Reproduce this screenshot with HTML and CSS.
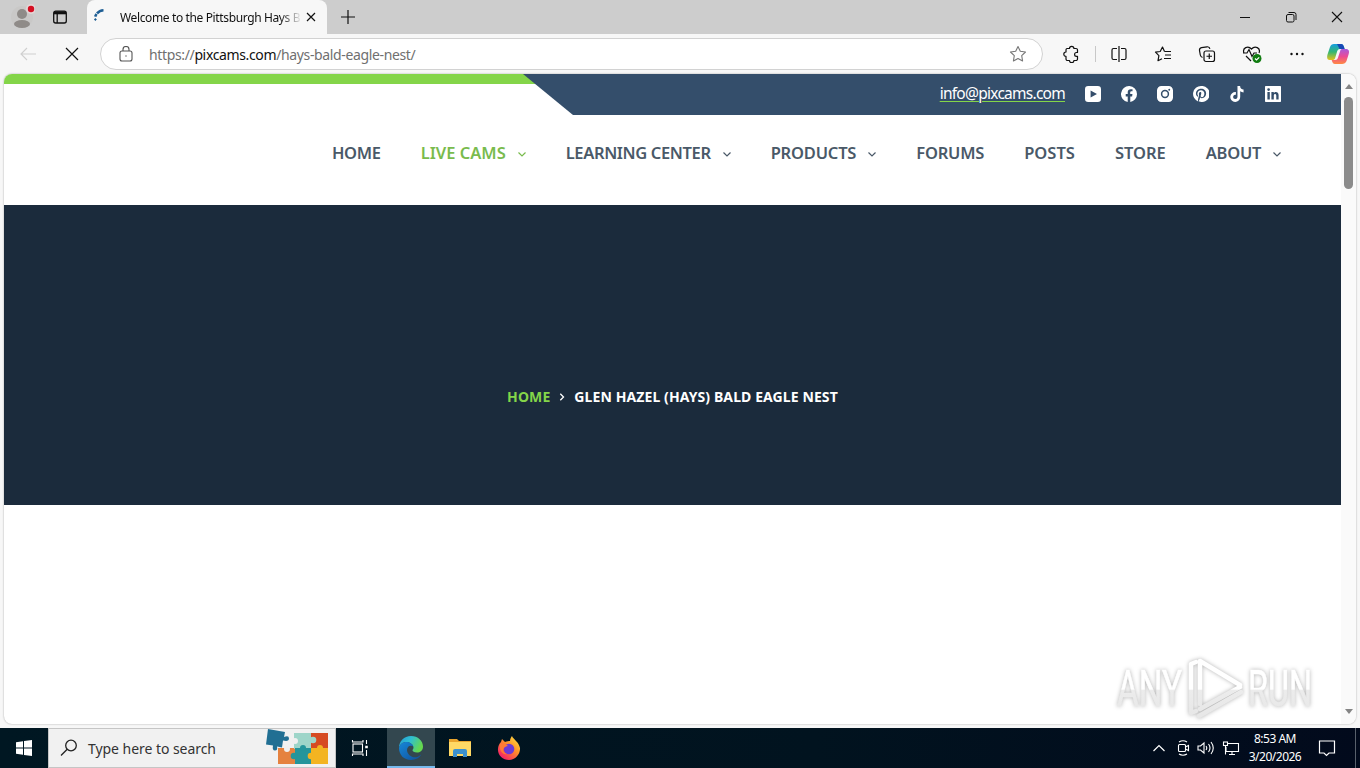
FILE: index.html
```html
<!DOCTYPE html>
<html lang="en">
<head>
    <meta charset="UTF-8">
    <meta name="viewport" content="width=device-width, initial-scale=1.0">
    <title>Welcome to the Pittsburgh Hays Bald Eagle Nest</title>
    <link rel="stylesheet" href="styles.css">
</head>
<body>

    <!-- Tab strip -->
    <div class="tabstrip">
        <svg class="profile" width="28" height="34" viewBox="0 0 28 34">
            <circle cx="15" cy="17" r="11" fill="#c9c8c7"/>
            <circle cx="15" cy="14" r="5" fill="#8f8b88"/>
            <ellipse cx="15" cy="24" rx="8" ry="4" fill="#8f8b88"/>
            <circle cx="24" cy="9" r="5" fill="#e3d5d5"/>
            <circle cx="24" cy="9" r="3.2" fill="#d40f22"/>
        </svg>
        <svg class="tab-menu" width="16" height="16" viewBox="0 0 16 16" fill="none" stroke="#111" stroke-width="1.3">
            <rect x="1.7" y="2.2" width="12.6" height="11.8" rx="2"/>
            <path d="M2 3.8h12" stroke-width="3"/>
            <path d="M5.2 5v9"/>
        </svg>
        <div class="tab">
            <svg class="spinner" width="16" height="16" viewBox="0 0 16 16" fill="none" stroke="#1f5f95" stroke-width="2.6">
                <path d="M11.500 2.200A9 9 0 0 0 5 5.400"/>
                <path d="M4.600 6A9 9 0 0 0 3.200 8.600"/>
                <circle cx="3.400" cy="11.500" r=".8" fill="#1f5f95" stroke-width="1"/>
            </svg>
            <span class="tab-title">Welcome to the Pittsburgh Hays B</span>
            <svg class="tab-close" width="10" height="10" viewBox="0 0 10 10" stroke="#111" stroke-width="1.2"><path d="M1 1l8 8M9 1l-8 8"/></svg>
        </div>
        <svg class="tab-add" width="14" height="14" viewBox="0 0 14 14" stroke="#111" stroke-width="1.2"><path d="M7 0v14M0 7h14"/></svg>
        <div class="window-buttons">
            <svg width="12" height="12" viewBox="0 0 12 12" stroke="#111"><path d="M1 6.500h10"/></svg>
            <svg width="12" height="12" viewBox="0 0 12 12" fill="none" stroke="#111"><rect x="1.500" y="3.500" width="7.500" height="7.500" rx="1.500"/><path d="M3.500 1.500H9A2 2 0 0 1 11 3.500V9"/></svg>
            <svg width="12" height="12" viewBox="0 0 12 12" stroke="#111" stroke-width="1.1"><path d="M1 1l10 10M11 1L1 11"/></svg>
        </div>
    </div>

    <!-- Address bar -->
    <div class="toolbar">
        <svg class="back" width="16" height="14" viewBox="0 0 16 14" fill="none" stroke="#cfcfcf" stroke-width="1.1"><path d="M16 7H1M7 1L1 7l6 6"/></svg>
        <svg class="stop" width="14" height="14" viewBox="0 0 14 14" stroke="#111" stroke-width="1.2"><path d="M1 1l12 12M13 1L1 13"/></svg>
        <div class="address">
            <svg width="14" height="16" viewBox="0 0 14 16" fill="none" stroke="#555" stroke-width="1.1"><rect x="1" y="5" width="12" height="10" rx="2"/><path d="M4 5V3.500a3 3 0 0 1 6 0V5"/><circle cx="7" cy="10" r=".7" fill="#555" stroke="none"/></svg>
            <span class="url">https://<b>pixcams.com</b>/hays-bald-eagle-nest/</span>
            <svg class="star" width="18" height="18" viewBox="0 0 18 18" fill="none" stroke="#777" stroke-width="1.1" stroke-linejoin="round"><path d="M9 1.500l2.300 4.800 5.200.7-3.800 3.700.9 5.300L9 13.500 4.400 16l.9-5.300L1.500 7l5.200-.7z"/></svg>
        </div>
        <div class="tools">
            <svg width="18" height="18" viewBox="0 0 18 18" fill="none" stroke="#111" stroke-width="1.2" stroke-linejoin="round"><path d="M5 3.500h2.500a2.200 2.200 0 0 1 4.400 0H14a1.500 1.500 0 0 1 1.500 1.500v2.500h-1a1.900 1.900 0 0 0 0 3.800h1V14a1.500 1.500 0 0 1-1.500 1.500h-2.100a2.200 2.200 0 0 1-4.400 0H5.500A1.500 1.500 0 0 1 4 14v-2.600a2.200 2.200 0 0 1 0-4.400V5a1.500 1.500 0 0 1 1-1.500z"/></svg>
            <i class="divider"></i>
            <svg width="18" height="18" viewBox="0 0 18 18" fill="none" stroke="#111" stroke-width="1.2"><path d="M7 3.500H3.500a1.500 1.500 0 0 0-1.500 1.500v8a1.500 1.500 0 0 0 1.500 1.500H7M11 3.500h3.500A1.500 1.500 0 0 1 16 5v8a1.500 1.500 0 0 1-1.500 1.500H11M9 1v16"/></svg>
            <svg width="18" height="18" viewBox="0 0 18 18" fill="none" stroke="#111" stroke-width="1.2" stroke-linejoin="round"><path d="M10.500 6.500L8.500 2 6.200 6.500 1.500 7.200l3.400 3.500-.9 5 4-2M10.500 6.500H17M11 10h6M10 13.500h7"/></svg>
            <svg width="18" height="18" viewBox="0 0 18 18" fill="none" stroke="#111" stroke-width="1.2"><rect x="6" y="6" width="10.500" height="10.500" rx="2"/><path d="M11.250 8.500v5.500M8.500 11.250H14M4.500 12.500C3 12 2.600 11.500 2.300 10L1.500 5.500C1.300 4 2 3 3.500 2.700L9 1.800c1.500-.2 2.600.4 2.900 2"/></svg>
            <svg width="20" height="18" viewBox="0 0 20 18" fill="none" stroke="#111" stroke-width="1.200"><path d="M2 8C0 3 6 0 9.500 4 13 0 19 3 17 8M4 11l5 5M1 8h4l2-3.500 3 7 2-3.500h3"/><circle cx="15" cy="13.500" r="4.500" fill="#107c10" stroke="none"/><path d="M13 13.500l1.500 1.500 2.700-2.700" stroke="#fff"/></svg>
            <svg width="18" height="18" viewBox="0 0 18 18" fill="#111"><circle cx="3.500" cy="9" r="1.200"/><circle cx="9" cy="9" r="1.200"/><circle cx="14.500" cy="9" r="1.200"/></svg>
            <svg class="copilot" width="24" height="24" viewBox="0 0 24 24">
                <defs>
                    <linearGradient id="cpA" x1="0" y1="0" x2="0" y2="1"><stop offset="0" stop-color="#169ee0"/><stop offset=".5" stop-color="#35b772"/><stop offset="1" stop-color="#e6c21a"/></linearGradient>
                    <linearGradient id="cpB" x1="0" y1="0" x2="0" y2="1"><stop offset="0" stop-color="#a85bdc"/><stop offset=".5" stop-color="#ec4b95"/><stop offset="1" stop-color="#ff8a42"/></linearGradient>
                </defs>
                <path d="M8 2h7c2 0 2.500 1.500 3 3l.6 2H14c-2 0-2.600 1.500-3.200 3.500L9 16.500C8.400 18 7.500 18 6 18H3.500C1 18 .8 15 1.500 12.500L4 5c.7-2 2-3 4-3z" fill="url(#cpA)"/>
                <path d="M11 2h4c2 0 2.500 1.500 3 3l.6 2h-5z" fill="#1748b5"/>
                <path d="M16 22H9c-2 0-2.500-1.500-3-3l-.3-1H9c2 0 2.600-1 3.200-3L14.500 8c.4-1 1-1 2-1H20c3 0 3.500 2.500 2.700 5L20.500 19c-.7 2-2.500 3-4.500 3z" fill="url(#cpB)"/>
            </svg>
        </div>
    </div>

    <!-- Web page -->
    <div class="viewport">
        <div class="page">
            <div class="topbar">
                <div class="topbar-inner">
                    <a class="email" href="#">info@pixcams.com</a>
                    <svg width="16" height="16" viewBox="0 0 20 20" fill="#fff"><path fill-rule="evenodd" d="M4 0h12a4 4 0 0 1 4 4v12a4 4 0 0 1-4 4H4a4 4 0 0 1-4-4V4a4 4 0 0 1 4-4zm3 5.500v9l8-4.500z"/></svg>
                    <svg width="16" height="16" viewBox="0 0 20 20" fill="#fff"><path d="M20 10.100a10 10 0 1 0-11.600 9.900v-7H5.900v-2.900h2.500V7.900c0-2.500 1.500-3.900 3.800-3.900 1.100 0 2.200.2 2.200.2v2.500h-1.300c-1.200 0-1.600.8-1.600 1.600v1.800h2.800l-.4 2.900h-2.300v7A10 10 0 0 0 20 10.100z"/></svg>
                    <svg width="16" height="16" viewBox="0 0 20 20" fill="#fff"><circle cx="10" cy="10" r="3.300"/><path fill-rule="evenodd" d="M5.500 0h9A5.500 5.500 0 0 1 20 5.500v9a5.500 5.500 0 0 1-5.500 5.500h-9A5.500 5.500 0 0 1 0 14.500v-9A5.500 5.500 0 0 1 5.500 0zM10 4.800a5.200 5.200 0 1 0 0 10.400 5.200 5.200 0 0 0 0-10.400zm5.300-1.400a1.200 1.200 0 1 0 0 2.400 1.200 1.200 0 0 0 0-2.400z"/></svg>
                    <svg width="16" height="16" viewBox="0 0 20 20" fill="#fff"><path d="M10 0a10 10 0 0 0-3.600 19.300c-.1-.8-.2-2 0-2.900l1.200-5s-.3-.6-.3-1.500c0-1.400.8-2.400 1.800-2.400.9 0 1.300.6 1.300 1.400 0 .8-.5 2.100-.8 3.300-.2 1 .5 1.800 1.500 1.800 1.800 0 3.100-1.900 3.100-4.600 0-2.400-1.700-4.100-4.200-4.100-2.800 0-4.500 2.100-4.500 4.300 0 .9.300 1.800.7 2.300l.1.300-.3 1.100c0 .2-.1.200-.3.100-1.300-.6-2-2.400-2-3.900 0-3.100 2.300-6 6.600-6 3.400 0 6.100 2.500 6.100 5.700 0 3.400-2.200 6.200-5.200 6.200-1 0-1.900-.5-2.300-1.200l-.6 2.400c-.2.900-.8 1.900-1.200 2.600A10 10 0 1 0 10 0z"/></svg>
                    <svg width="16" height="16" viewBox="0 0 20 20" fill="#fff"><path d="M18.200 4.500a4.600 4.600 0 0 1-4.300-4.500h-3.300v13.700a2.700 2.700 0 1 1-2-2.700V7.600a6.200 6.200 0 1 0 5.400 6.100v-7a7.800 7.800 0 0 0 4.200 1.300z"/></svg>
                    <svg width="16" height="16" viewBox="0 0 20 20" fill="#fff"><path fill-rule="evenodd" d="M1 0h18a1 1 0 0 1 1 1v18a1 1 0 0 1-1 1H1a1 1 0 0 1-1-1V1a1 1 0 0 1 1-1zm2 7.500V17h3V7.500zM4.500 2.800a1.700 1.700 0 1 0 0 3.400 1.700 1.700 0 0 0 0-3.400zM8 7.500V17h3v-5c0-2.700 3.100-2.600 3.100 0v5H17v-5.700c0-4.500-4.500-4.900-6-2.400V7.500z"/></svg>
                </div>
            </div>
            <nav class="menu">
                <a>HOME</a>
                <a class="active">LIVE CAMS<svg width="8" height="8" viewBox="0 0 8 8"><path d="M.5 2.500L4 6l3.500-3.500"/></svg></a>
                <a class="learning">LEARNING CENTER<svg width="8" height="8" viewBox="0 0 8 8"><path d="M.5 2.500L4 6l3.500-3.500"/></svg></a>
                <a class="products">PRODUCTS<svg width="8" height="8" viewBox="0 0 8 8"><path d="M.5 2.500L4 6l3.500-3.500"/></svg></a>
                <a class="products">FORUMS</a>
                <a class="short">POSTS</a>
                <a class="short">STORE</a>
                <a>ABOUT<svg width="8" height="8" viewBox="0 0 8 8"><path d="M.5 2.500L4 6l3.500-3.500"/></svg></a>
            </nav>
            <div class="hero">
                <div class="breadcrumbs">
                    <span class="crumb-home">HOME</span>
                    <svg width="8" height="8" viewBox="0 0 8 8" fill="none" stroke="#fff" stroke-width="1.300"><path d="M2.300.8L5.500 4 2.300 7.200"/></svg>
                    <span class="crumb">GLEN HAZEL (HAYS) BALD EAGLE NEST</span>
                </div>
            </div>
        </div>
        <div class="scrollbar">
            <i class="arrow-up"></i>
            <i class="thumb"></i>
            <i class="arrow-down"></i>
        </div>
        <svg class="watermark" width="200" height="66" viewBox="0 0 200 66">
            <defs>
                <linearGradient id="fade" x1="0" y1="0" x2="0" y2="64" gradientUnits="userSpaceOnUse"><stop offset=".52" stop-color="#fff"/><stop offset=".53" stop-color="#ececec"/><stop offset="1" stop-color="#e6e6e6"/></linearGradient>
            </defs>
            <g fill="url(#fade)" stroke="url(#fade)" stroke-width=".6">
                <text x="1" y="50" textLength="65" lengthAdjust="spacingAndGlyphs">ANY</text>
                <text x="132" y="50" textLength="64" lengthAdjust="spacingAndGlyphs">RUN</text>
            </g>
            <path d="M75 52V8l5-2M75 52v5l5-2M84 48V5l40 24M84 53l40-22M83 60l42-24" fill="none" stroke="url(#fade)" stroke-width="4.500" stroke-linecap="round" stroke-linejoin="round"/>
        </svg>
    </div>

    <!-- Windows taskbar -->
    <div class="taskbar">
        <div class="start"><svg width="16" height="16" viewBox="0 0 16 16" fill="#fff"><path d="M0 2.200L7 1.200V7.500H0zM8 1.100L16 0v7.500H8zM0 8.500h7v6.300l-7-1zM8 8.500h8V16l-8-1.100z"/></svg></div>
        <div class="search">
            <svg width="18" height="18" viewBox="0 0 18 18" fill="none" stroke="#222" stroke-width="1.300"><circle cx="11" cy="6.500" r="5.300"/><path d="M7.200 10.300L1 16.500"/></svg>
            <span>Type here to search</span>
            <svg class="puzzle" width="64" height="38" viewBox="0 0 64 38">
                <path d="M13 19h18v16H13z" fill="#e5823f"/>
                <path d="M29 4h18v16H29z" fill="#9ed5c9"/>
                <path d="M46 4h17v16H46z" fill="#d64b22"/>
                <path d="M30 19h17v16H30z" fill="#24959b"/>
                <path d="M46 19h17v16H46z" fill="#f3b421"/>
                <circle cx="29" cy="27" r="3.300" fill="#24959b"/><circle cx="48" cy="11" r="3.300" fill="#9ed5c9"/><circle cx="46" cy="27" r="3.300" fill="#f3b421"/>
                <circle cx="38" cy="19" r="3" fill="#24959b"/><circle cx="55" cy="19" r="3" fill="#f3b421"/>
                <circle cx="30" cy="12" r="3" fill="#f0f0f0"/><circle cx="22" cy="20" r="3" fill="#f0f0f0"/>
                <path d="M3 0l17 3-1 5q5-2 5 1.500t-6 2l-1 7-5-1q1 4-2 4t-2-5l-7-1z" fill="#216f93"/>
            </svg>
        </div>
        <div class="task view"><svg width="18" height="18" viewBox="0 0 18 18" fill="none" stroke="#fff" stroke-width="1.100"><rect x="2" y="5" width="9.500" height="8"/><path d="M1.500 1v2h10.500V1M1.500 17v-2h10.500v2M15.500 1v4M15.500 11v6"/><path d="M14.200 8h2.600" stroke-width="2.500"/></svg></div>
        <div class="task current">
            <svg width="26" height="26" viewBox="0 0 26 26">
                <defs>
                    <linearGradient id="edA" x1="0" y1="0" x2="1" y2=".4"><stop offset="0" stop-color="#229bd8"/><stop offset=".5" stop-color="#30bfd0"/><stop offset="1" stop-color="#65d84f"/></linearGradient>
                    <linearGradient id="edB" x1="0" y1="0" x2="1" y2="1"><stop offset="0" stop-color="#1687d8"/><stop offset="1" stop-color="#104f99"/></linearGradient>
                </defs>
                <path d="M1 13C1 6 6 1 13 1s12 5 12 10.500c0 4-3 6-6 6s-4.500-1.200-4.500-2.200c0-.8 1-1 1-2.800C15.500 9.500 12 7 8.500 7 5 7 2 9 1 13z" fill="url(#edA)"/>
                <path d="M1 13c1-4 4-6 7.500-6 3 0 6 2 6.800 4.200C11.500 9.500 9 12 9 15c0 4.500 5 8.200 9.500 7.200 2-.4 3.500-1.400 4.700-2.600C21.500 23 17.800 25 13 25 6 25 1 20 1 13z" fill="url(#edB)"/>
            </svg>
        </div>
        <div class="task">
            <svg width="24" height="22" viewBox="0 0 24 22"><path d="M1 2h8l2 2h12v15H1z" fill="#eaa52d"/><path d="M1 5h22v14H1z" fill="#ffd965"/><path d="M5 20v-6q0-2 2-2h10q2 0 2 2v6h-4v-3H9v3z" fill="#3c91cf"/></svg>
        </div>
        <div class="task">
            <svg width="24" height="24" viewBox="0 0 24 24">
                <defs><linearGradient id="ff" x1="1" y1="0" x2=".2" y2="1"><stop offset="0" stop-color="#fff04a"/><stop offset=".45" stop-color="#ff9528"/><stop offset="1" stop-color="#f5156c"/></linearGradient></defs>
                <path d="M4 6l1-3 3 3c2-1 4-1 5-1 0-2 1-4 2-5 1 3 7 6 8 12 .5 6-4.500 12-11 12S.500 19 1 13c.2-3 1-5 3-7z" fill="url(#ff)"/>
                <circle cx="12" cy="13" r="5.300" fill="#6b3bd6"/>
                <path d="M3 8c3-1 6 0 8 2-2 0-3 1-4 2-2 2 0 5 3 6-4 1-8-3-7-10z" fill="#ff7a35"/>
            </svg>
        </div>
        <div class="tray">
            <svg width="14" height="14" viewBox="0 0 14 14" fill="none" stroke="#fff" stroke-width="1.200"><path d="M1.500 10L7 4.500l5.500 5.500"/></svg>
            <svg class="camera" width="14" height="16" viewBox="0 0 14 16" fill="none" stroke="#fff" stroke-width="1.100"><rect x="2.500" y="4.500" width="7" height="7" rx="1"/><path d="M9.500 7l3-1.500v5l-3-1.500M3 2q4-2.500 8 0M3 14q4 2.500 8 0"/></svg>
            <svg width="18" height="16" viewBox="0 0 18 16" fill="none" stroke="#fff" stroke-width="1.100"><path d="M1 6v4h2.500L7 13V3L3.500 6zM9 6q1.500 2 0 4M11.500 4q3 4 0 8M14 2q4.500 6 0 12"/></svg>
            <svg width="18" height="16" viewBox="0 0 18 16" fill="none" stroke="#fff" stroke-width="1.100"><path d="M6 3.500h10.500v8H4V7M10 11.500V14M7 14.500h6"/><rect x="1.500" y="2" width="4" height="3.500"/><path d="M3.500 5.500v9"/></svg>
            <div class="clock"><span>8:53 AM</span><span>3/20/2026</span></div>
            <svg width="18" height="18" viewBox="0 0 18 18" fill="none" stroke="#fff" stroke-width="1.200"><path d="M1.500 2h15v12H11l-2.500 2.500L6 14H1.500z"/></svg>
            <i class="show-desktop"></i>
        </div>
    </div>

</body>
</html>
```
FILE: styles.css
```css
body {
    margin: 0;
    width: 1360px;
    height: 768px;
    overflow: hidden;
    display: flex;
    flex-direction: column;
    background: #f7f7f7;
    font-family: "Noto Sans", "Open Sans", sans-serif;
}

svg {
    display: block;
    flex: none;
}

/* Tab strip */
.tabstrip {
    height: 34px;
    flex: none;
    display: flex;
    align-items: center;
    background: #cdcdcd;
}

.profile {
    margin-left: 7px;
}

.tab-menu {
    margin-left: 17px;
}

.tab {
    width: 240px;
    height: 34px;
    margin-left: 19px;
    box-sizing: border-box;
    padding: 0 11px 0 5px;
    display: flex;
    align-items: center;
    background: #f7f7f7;
    border-radius: 8px 8px 0 0;
}

.spinner {
    margin-top: -3px;
}

.tab-title {
    width: 180px;
    margin-left: 12px;
    white-space: nowrap;
    font-size: 12px;
    letter-spacing: -0.37px;
    color: #111;
    -webkit-mask-image: linear-gradient(to right, #000 160px, transparent 182px);
    mask-image: linear-gradient(to right, #000 160px, transparent 182px);
}

.tab-close {
    margin-left: 6px;
}

.tab-add {
    margin-left: 14px;
}

.window-buttons {
    margin-left: auto;
    margin-right: 17px;
    display: flex;
    gap: 34px;
}

/* Address bar */
.toolbar {
    height: 40px;
    flex: none;
    display: flex;
    align-items: center;
}

.back {
    margin-left: 20px;
}

.stop {
    margin-left: 29px;
}

.address {
    width: 943px;
    height: 32px;
    margin-left: 21px;
    box-sizing: border-box;
    padding: 0 15px 0 18px;
    display: flex;
    align-items: center;
    background: #fff;
    border: 1px solid #d2d2d2;
    border-radius: 16px;
}

.url {
    margin-left: 16px;
    font-size: 14px;
    letter-spacing: -0.36px;
    color: #707070;
}

.url b {
    font-weight: 400;
    color: #111;
}

.star {
    margin-left: auto;
}

.tools {
    margin-left: 19px;
    display: flex;
    align-items: center;
    gap: 26px;
}

.divider {
    width: 1px;
    height: 16px;
    margin: 0 -12px 0 -11px;
    background: #c8c8c8;
}

.copilot {
    margin-left: -6px;
}

/* Browser viewport */
.viewport {
    position: relative;
    height: 650px;
    margin: 0 4px 4px;
    flex: none;
    display: flex;
    background: #fff;
    border-radius: 8px;
    overflow: hidden;
    box-shadow: 0 0 2px rgba(0, 0, 0, 0.35);
}

.page {
    width: 1337px;
}

.topbar {
    height: 41px;
    background: linear-gradient(#84d549, #84d549) 0 0 / 100% 10px no-repeat;
}

.topbar-inner {
    height: 41px;
    box-sizing: border-box;
    padding: 0 60px 1px 0;
    display: flex;
    align-items: center;
    justify-content: flex-end;
    gap: 20px;
    background: #344e6b;
    clip-path: polygon(519px 0, 100% 0, 100% 100%, 569px 100%);
}

.email {
    color: #fff;
    font-size: 15.5px;
    line-height: 20px;
    letter-spacing: -0.74px;
    text-decoration-color: #84d549;
    text-decoration-thickness: 1px;
    text-underline-offset: 2px;
    margin-top: -2px;
}

.menu {
    height: 90px;
    box-sizing: border-box;
    padding: 0 60px 15px 0;
    display: flex;
    align-items: center;
    justify-content: flex-end;
    gap: 40px;
    font-size: 16.5px;
    font-weight: 600;
    letter-spacing: -0.3px;
    color: #4a5968;
}

.menu a {
    display: flex;
    align-items: center;
    white-space: nowrap;
}

.menu svg {
    margin: 3px 0 0 12px;
    fill: none;
    stroke: currentColor;
    stroke-width: 1.2;
}

.menu .active {
    color: #79bb4d;
    letter-spacing: 0;
}

.menu .learning {
    letter-spacing: -0.37px;
}

.menu .products {
    letter-spacing: -0.2px;
}

.menu .short {
    letter-spacing: 0;
}

.hero {
    height: 300px;
    box-sizing: border-box;
    padding-top: 182px;
    background: #1b2b3c;
}

.breadcrumbs {
    display: flex;
    align-items: center;
    justify-content: center;
    gap: 8px;
    font-size: 14px;
    line-height: 20px;
    font-weight: 700;
    letter-spacing: 0.1px;
    color: #fff;
}

.crumb-home {
    color: #84d549;
}

.scrollbar {
    width: 15px;
    box-sizing: border-box;
    padding: 10px 0;
    display: flex;
    flex-direction: column;
    align-items: center;
    background: #fafafa;
}

.arrow-up,
.arrow-down {
    border: 4.5px solid transparent;
    border-top: 0;
    border-bottom: 5px solid #858585;
}

.arrow-down {
    margin-top: auto;
    border-top: 5px solid #858585;
    border-bottom: 0;
}

.thumb {
    width: 9px;
    height: 92px;
    margin-top: 8px;
    border-radius: 5px;
    background: #8b8b8b;
}

/* Logo lying over the bottom right corner */
.watermark {
    position: absolute;
    right: 40px;
    bottom: 2px;
    overflow: visible;
    filter: drop-shadow(0 0 2px rgba(0, 0, 0, 0.3));
}

.watermark text {
    font-family: Roboto, sans-serif;
    font-size: 50px;
    font-weight: 400;
}

/* Taskbar */
.taskbar {
    height: 40px;
    flex: none;
    display: flex;
    background: linear-gradient(to right, #001722, #01131f 60%, #020a1c);
}

.start {
    width: 48px;
    display: flex;
    align-items: center;
    justify-content: center;
}

.search {
    width: 288px;
    box-sizing: border-box;
    padding: 0 6px 0 11px;
    display: flex;
    align-items: center;
    background: #f1f1f1;
    border: 1px solid #c5c5c5;
}

.search span {
    margin-left: 10px;
    font-size: 14px;
    letter-spacing: -0.05px;
    color: #333;
}

.puzzle {
    margin-left: auto;
}

.task {
    width: 49px;
    display: flex;
    align-items: center;
    justify-content: center;
}

.task.view {
    width: 47px;
}

.task.current {
    width: 48px;
    margin-left: 4px;
    box-sizing: border-box;
    border-bottom: 2px solid #76b9ed;
    padding-top: 2px;
    background: #33474f;
}

.tray {
    margin-left: auto;
    display: flex;
    align-items: center;
}

.tray svg + svg {
    margin-left: 7px;
}

.tray svg + .camera {
    margin-left: 10px;
}

.clock {
    width: 56px;
    margin: 0 15px 0 7px;
    display: flex;
    flex-direction: column;
    align-items: center;
    font-size: 12px;
    line-height: 18px;
    letter-spacing: -0.5px;
    color: #fff;
    white-space: nowrap;
}

.show-desktop {
    width: 4px;
    height: 40px;
    margin-left: 19px;
    border-left: 1px solid #59616c;
}
```
